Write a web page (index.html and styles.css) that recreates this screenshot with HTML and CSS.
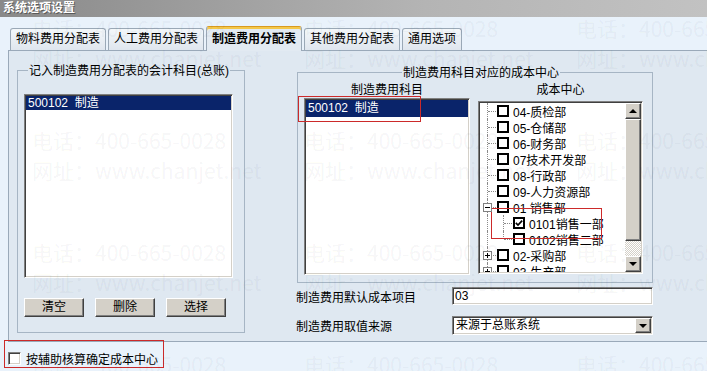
FILE: index.html
```html
<!DOCTYPE html>
<html lang="zh-CN">
<head>
<meta charset="utf-8">
<title>系统选项设置</title>
<link rel="stylesheet" href="styles.css">
</head>
<body>
<div class="window">
  <div class="titlebar">系统选项设置</div>
  <div class="tabarea">
    <div class="tabs">
      <div class="tab">物料费用分配表</div>
      <div class="tab">人工费用分配表</div>
      <div class="tab active">制造费用分配表</div>
      <div class="tab">其他费用分配表</div>
      <div class="tab">通用选项</div>
    </div>
    <div class="panel">
      <div class="group g-left">
        <div class="gtitle gt-left">记入制造费用分配表的会计科目(总账)</div>
        <div class="sunken lb-left">
          <div class="item sel">500102&nbsp;&nbsp;制造</div>
        </div>
        <div class="btns">
          <div class="btn raised">清空</div>
          <div class="btn raised">删除</div>
          <div class="btn raised">选择</div>
        </div>
      </div>
      <div class="rightcol">
        <div class="group g-right">
          <div class="gtitle gt-right">制造费用科目对应的成本中心</div>
          <div class="cols">
            <div class="col col-a">
              <div class="sublabel">制造费用科目</div>
              <div class="sunken lb-right">
                <div class="item item-r sel">500102&nbsp;&nbsp;制造</div>
              </div>
            </div>
            <div class="col col-b">
              <div class="sublabel">成本中心</div>
              <div class="sunken tree">
                <div class="tree-body">
                  <div class="node"><span class="g"></span><span class="cb"></span><span class="t">04-质检部</span></div>
                  <div class="node"><span class="g"></span><span class="cb"></span><span class="t">05-仓储部</span></div>
                  <div class="node"><span class="g"></span><span class="cb"></span><span class="t">06-财务部</span></div>
                  <div class="node"><span class="g"></span><span class="cb"></span><span class="t">07技术开发部</span></div>
                  <div class="node"><span class="g"></span><span class="cb"></span><span class="t">08-行政部</span></div>
                  <div class="node"><span class="g"></span><span class="cb"></span><span class="t">09-人力资源部</span></div>
                  <div class="node"><span class="g"><span class="exp minus"></span></span><span class="cb"></span><span class="t">01 销售部</span></div>
                  <div class="node"><span class="g cont"></span><span class="g"></span><span class="cb checked"><svg viewBox="0 0 8 8" width="8" height="8"><polyline points="0.8,3.8 3,6 7.2,1.6" fill="none" stroke="#000" stroke-width="1.7"/></svg></span><span class="t">0101销售一部</span></div>
                  <div class="node"><span class="g cont"></span><span class="g last"></span><span class="cb"></span><span class="t">0102销售二部</span></div>
                  <div class="node"><span class="g"><span class="exp plus"></span></span><span class="cb"></span><span class="t">02-采购部</span></div>
                  <div class="node"><span class="g"><span class="exp plus"></span></span><span class="cb"></span><span class="t">03-生产部</span></div>
                </div>
                <div class="vscroll">
                  <div class="sb-btn raised"><span class="arr up"></span></div>
                  <div class="thumb raised"></div>
                  <div class="track"></div>
                  <div class="sb-btn raised"><span class="arr down"></span></div>
                </div>
              </div>
            </div>
          </div>
          <div class="mark mark-list"></div>
          <div class="mark mark-tree"></div>
        </div>
        <div class="field f1">
          <div class="flabel">制造费用默认成本项目</div>
          <div class="sunken input">03</div>
        </div>
        <div class="field f2">
          <div class="flabel">制造费用取值来源</div>
          <div class="sunken select">
            <span class="sel-text">来源于总账系统</span>
            <span class="dd raised"><span class="arr down"></span></span>
          </div>
        </div>
      </div>
    </div>
  </div>
  <div class="bottom">
    <div class="markbox"><span class="chk"></span><span class="chk-text">按辅助核算确定成本中心</span></div>
  </div>

  <div class="wm">
    <div class="wc"><div>电话：400-665-0028</div><div>网址：www.chanjet.net</div></div>
    <div class="wc"><div>电话：400-665-0028</div><div>网址：www.chanjet.net</div></div>
    <div class="wc"><div>电话：400-665-0028</div><div>网址：www.chanjet.net</div></div>
    <div class="wc"><div>电话：400-665-0028</div><div>网址：www.chanjet.net</div></div>
    <div class="wc"><div>电话：400-665-0028</div><div>网址：www.chanjet.net</div></div>
    <div class="wc"><div>电话：400-665-0028</div><div>网址：www.chanjet.net</div></div>
    <div class="wc"><div>电话：400-665-0028</div><div>网址：www.chanjet.net</div></div>
    <div class="wc"><div>电话：400-665-0028</div><div>网址：www.chanjet.net</div></div>
    <div class="wc"><div>电话：400-665-0028</div><div>网址：www.chanjet.net</div></div>
    <div class="wc"><div>电话：400-665-0028</div><div>网址：www.chanjet.net</div></div>
    <div class="wc"><div>电话：400-665-0028</div><div>网址：www.chanjet.net</div></div>
    <div class="wc"><div>电话：400-665-0028</div><div>网址：www.chanjet.net</div></div>
  </div>
</div>
</body>
</html>
```
FILE: styles.css
```css
* { box-sizing: border-box; }
html, body { margin: 0; padding: 0; }
body {
  width: 707px;
  height: 371px;
  overflow: hidden;
  background: #e9f2fb;
  font-family: "Liberation Sans", "Noto Sans CJK SC", sans-serif;
  font-size: 12px;
  color: #000;
}
.window {
  position: relative;
  width: 707px;
  height: 371px;
  overflow: hidden;
}
.titlebar {
  height: 17px;
  line-height: 17px;
  padding-left: 3px;
  background: linear-gradient(to right, #898989, #b4b4b4 60%, #c2c2c2);
  color: #fff;
  font-weight: bold;
  font-size: 12px;
  text-shadow: 1px 1px 0 #5a5a5a;
}
.tabarea {
  padding: 9px 0 0 8px;
}
.tabs {
  display: flex;
  align-items: flex-end;
  height: 24px;
  padding-left: 2px;
}
.tab {
  position: relative;
  height: 22px;
  line-height: 21px;
  padding: 0 5px;
  margin-right: 2px;
  border: 1px solid #9aa8b6;
  border-bottom: none;
  border-radius: 3px 3px 0 0;
  background: linear-gradient(#f3f7fa, #dfe6ee);
  white-space: nowrap;
}
.tab.active {
  height: 25px;
  margin-bottom: -1px;
  padding-top: 2px;
  line-height: 20px;
  font-weight: bold;
  background: #e2eaf2;
  border-top: 1px solid #d89a22;
  box-shadow: inset 0 2px 0 #f4c84a;
  z-index: 2;
}
.panel {
  display: flex;
  align-items: flex-start;
  width: 720px;
  height: 292px;
  padding: 19px 0 0 8px;
  background: #dfe8f1;
  border: 1px solid #9aa9b9;
}
.group {
  position: relative;
  border: 1px solid #a6b5c4;
  display: flex;
  flex-direction: column;
  align-items: flex-start;
}
.gtitle {
  margin-top: -8px;
  height: 16px;
  line-height: 16px;
  padding: 0 1px;
  background: #dfe8f1;
  white-space: nowrap;
}
.g-left {
  width: 228px;
  height: 263px;
}
.gt-left { margin-left: 10px; }
.sunken {
  background: #fff;
  border: 1px solid;
  border-color: #808080 #fff #fff #808080;
  padding: 1px;
  box-shadow: inset 1px 1px 0 #404040, inset -1px -1px 0 #d4d0c8;
}
.raised {
  background: #d4d0c8;
  border: 1px solid;
  border-color: #fff #404040 #404040 #fff;
  box-shadow: inset -1px -1px 0 #808080;
}
.lb-left {
  margin: 15px 0 0 6px;
  width: 209px;
  height: 184px;
}
.item {
  height: 14px;
  line-height: 14px;
  padding-left: 2px;
  white-space: nowrap;
}
.item.sel {
  background: #0a246a;
  color: #fff;
}
.item-r {
  height: 17px;
  line-height: 17px;
}
.btns {
  display: flex;
  margin: 20px 0 0 6px;
}
.btn {
  width: 60px;
  height: 19px;
  line-height: 17px;
  text-align: center;
  margin-right: 11px;
}
.rightcol {
  margin-left: 52px;
  display: flex;
  flex-direction: column;
}
.g-right {
  margin-top: 2px;
  width: 356px;
  height: 211px;
}
.gt-right { margin-left: 104px; }
.cols {
  display: flex;
  align-items: flex-start;
  margin-top: 1px;
}
.col { display: flex; flex-direction: column; }
.sublabel {
  height: 16px;
  line-height: 16px;
  text-align: center;
}
.col-a { margin-left: 6px; width: 166px; }
.col-b { margin-left: 8px; width: 165px; }
.lb-right { height: 177px; }
.tree {
  margin-top: 3px;
  height: 173px;
  display: flex;
}
.tree-body {
  flex: 1;
  overflow: hidden;
  background: #fff;
}
.node {
  display: flex;
  align-items: center;
  height: 16px;
  white-space: nowrap;
}
.g {
  position: relative;
  flex: none;
  width: 16px;
  height: 16px;
}
.g::before {
  content: "";
  position: absolute;
  left: 7px;
  top: 0;
  bottom: 0;
  border-left: 1px dotted #8a8a8a;
}
.g::after {
  content: "";
  position: absolute;
  left: 8px;
  top: 8px;
  width: 8px;
  border-top: 1px dotted #8a8a8a;
}
.g.cont::after { display: none; }
.g.last::before { bottom: 8px; }
.exp {
  position: absolute;
  left: 3px;
  top: 4px;
  width: 9px;
  height: 9px;
  border: 1px solid #808080;
  background: #fff;
  z-index: 1;
}
.exp::before {
  content: "";
  position: absolute;
  left: 1px;
  top: 3px;
  width: 5px;
  height: 1px;
  background: #000;
}
.exp.plus::after {
  content: "";
  position: absolute;
  left: 3px;
  top: 1px;
  width: 1px;
  height: 5px;
  background: #000;
}
.cb {
  flex: none;
  width: 12px;
  height: 12px;
  margin-left: 1px;
  border: 2px solid #000;
  background: #fff;
  display: flex;
  align-items: center;
  justify-content: center;
}
.t { margin-left: 4px; }
.vscroll {
  flex: none;
  width: 16px;
  display: flex;
  flex-direction: column;
}
.sb-btn {
  height: 16px;
  display: flex;
  align-items: center;
  justify-content: center;
}
.thumb { height: 122px; }
.track {
  flex: 1;
  background-color: #fff;
  background-image: conic-gradient(#d4d0c8 0 25%, #fff 0 50%, #d4d0c8 0 75%, #fff 0);
  background-size: 2px 2px;
}
.arr {
  width: 0;
  height: 0;
  border-left: 4px solid transparent;
  border-right: 4px solid transparent;
}
.arr.up { border-bottom: 4px solid #000; }
.arr.down { border-top: 4px solid #000; }
.mark {
  position: absolute;
  border: 1px solid #cc2a2a;
  pointer-events: none;
}
.mark-list {
  left: 0;
  top: 23px;
  width: 123px;
  height: 26px;
}
.mark-tree {
  left: 193px;
  top: 135px;
  width: 111px;
  height: 31px;
}
.field {
  display: flex;
  align-items: center;
  margin-left: -1px;
}
.f1 { margin-top: 4px; height: 18px; }
.f2 { margin-top: 11px; height: 19px; }
.flabel { width: 156px; }
.input {
  width: 201px;
  height: 18px;
  line-height: 14px;
  padding-left: 2px;
}
.select {
  width: 201px;
  height: 19px;
  display: flex;
  align-items: stretch;
}
.sel-text {
  flex: 1;
  line-height: 15px;
  padding-left: 2px;
}
.dd {
  width: 16px;
  display: flex;
  align-items: center;
  justify-content: center;
}
.bottom {
  padding-left: 4px;
}
.markbox {
  display: flex;
  align-items: center;
  width: 160px;
  height: 28px;
  margin-top: -2px;
  padding: 9px 0 0 3px;
  border: 1px solid #cc2a2a;
  position: relative;
}
.chk {
  width: 13px;
  height: 13px;
  background: #fff;
  border: 1px solid;
  border-color: #808080 #fff #fff #808080;
  box-shadow: inset 1px 1px 0 #404040, inset -1px -1px 0 #d4d0c8;
}
.chk-text { margin-left: 5px; white-space: nowrap; }
.wm {
  position: absolute;
  left: 0;
  top: 0;
  width: 900px;
  height: 480px;
  pointer-events: none;
  z-index: 10;
  display: grid;
  grid-template-columns: repeat(3, 272px);
  grid-auto-rows: 112px;
  padding: 13px 0 0 32px;
  font-family: "Noto Sans CJK SC", sans-serif;
  font-size: 21px;
  line-height: 30px;
  color: rgba(10, 30, 60, 0.055);
  white-space: nowrap;
}
```
